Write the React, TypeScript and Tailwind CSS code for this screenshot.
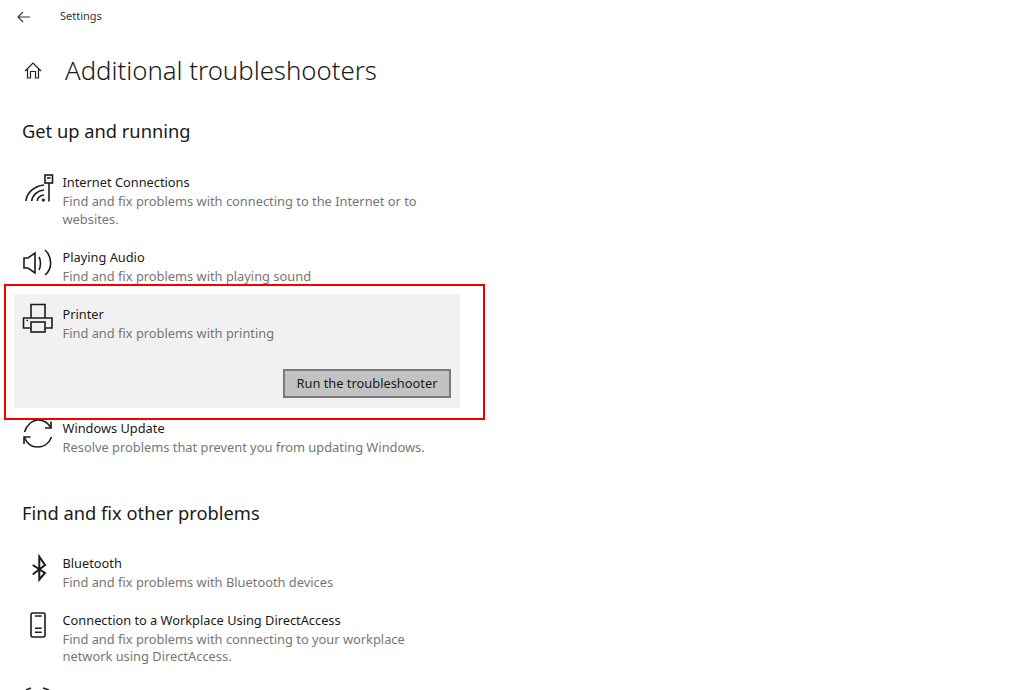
import type { ReactNode } from "react";

function BackIcon() {
  return (
    <svg width="14" height="12" viewBox="0 0 14 12" fill="none" stroke="#333" strokeWidth="1.1">
      <path d="M13 6H1.2M6 1 1 6l5 5" />
    </svg>
  );
}

function HomeIcon() {
  return (
    <svg width="18" height="18" viewBox="0 0 18 18" fill="none" stroke="#222" strokeWidth="1.2">
      <path d="M1 10 9 2l8 8M3.500 8V17H6.500V10.500H11.500V17H14.500V8" />
    </svg>
  );
}

function Icon({ children }: { children: ReactNode }) {
  return (
    <svg width="32" height="32" viewBox="0 0 32 32" fill="none" stroke="#1c1c1c" strokeWidth="1.6">
      {children}
    </svg>
  );
}

function NetworkIcon() {
  return (
    <Icon>
      <path d="M4 30C4.500 22 12 15 22 14" />
      <path d="M9.700 30C10 25 15 19.500 22 19" />
      <path d="M15.300 30C15.500 27 18 24.500 22 24" />
      <circle cx="21.300" cy="29" r="1.600" fill="#1c1c1c" stroke="none" />
      <path d="M27 12V30.500" />
      <rect x="23" y="4" width="7.500" height="8" />
      <path d="M25 7h3.500" />
    </Icon>
  );
}

function SpeakerIcon() {
  return (
    <Icon>
      <path d="M2 12h4L13 7v20L6 22H2z" />
      <path d="M17 11c2 3 2 9 0 13" />
      <path d="M23 4c7.500 7 7.500 19 0 25" />
    </Icon>
  );
}

function PrinterIcon() {
  return (
    <Icon>
      <path d="M9 15V1.500h14V15" />
      <path d="M9 25H1.500V15H30V25H23" />
      <rect x="9" y="19" width="14" height="10" />
      <path d="M4.500 17.500h1.500" />
    </Icon>
  );
}

function SyncIcon() {
  return (
    <Icon>
      <path d="M2.500 15C5 7 11 3 16 3C21 3 26 5.500 29 11" />
      <path d="M29 4.500V11H23" />
      <path d="M29.500 20C27 27 21 30 15.500 30C10 30 5 27 2.500 20.500" />
      <path d="M2 27V20H8.500" />
    </Icon>
  );
}

function BluetoothIcon() {
  return (
    <Icon>
      <path d="M10.700 13 23 21 17.300 27.500V4.700L23 13 10.700 22.500" strokeWidth="2" />
    </Icon>
  );
}

function PhoneIcon() {
  return (
    <Icon>
      <rect x="9" y="4" width="14" height="24" rx="1.500" />
      <path d="M13 7h6.700M13 19.300h6.700M13 23.300h6.700" />
    </Icon>
  );
}

function TroubleshooterRow({
  icon,
  title,
  children,
}: {
  icon: ReactNode;
  title: string;
  children: ReactNode;
}) {
  return (
    <div className="flex">
      <div className="-mt-[2px] h-[32px] w-[48.5px] shrink-0 pl-[8px]">{icon}</div>
      <div className="w-[375px]">
        <div className="h-[20px] text-[12.8px] leading-[18px] text-[#1a1a1a]">{title}</div>
        <div className="text-[12.85px] leading-[17.5px] text-[#767676]">{children}</div>
      </div>
    </div>
  );
}

export default function App() {
  return (
    <div className="relative h-[690px] w-[1024px] overflow-hidden bg-white font-['Noto_Sans',sans-serif]">
      <header className="flex h-[33px] items-center pl-[17px]">
        <BackIcon />
        <span className="ml-[29px] text-[11px] text-[#333]">Settings</span>
      </header>

      <div className="mt-[18px] flex h-[38px] items-center pl-[24px]">
        <HomeIcon />
        <h1 className="ml-[23px] text-[25.75px] font-light text-[#1a1a1a]">Additional troubleshooters</h1>
      </div>

      <h2 className="mt-[29px] h-[27px] pl-[22px] text-[18.3px] leading-[25px] text-[#1a1a1a]">Get up and running</h2>

      <section className="mt-[28px] ml-[14px] w-[446px]">
        <div className="h-[75px]">
          <TroubleshooterRow icon={<NetworkIcon />} title="Internet Connections">
            Find and fix problems with connecting to the Internet or to websites.
          </TroubleshooterRow>
        </div>
        <div className="h-[46px]">
          <TroubleshooterRow icon={<SpeakerIcon />} title="Playing Audio">
            Find and fix problems with playing sound
          </TroubleshooterRow>
        </div>
        <div className="h-[114px] bg-[#f1f1f1] pt-[11px]">
          <TroubleshooterRow icon={<PrinterIcon />} title="Printer">
            Find and fix problems with printing
          </TroubleshooterRow>
          <div className="mt-[26px] flex justify-end pr-[9px]">
            <button className="h-[29px] w-[168px] border-2 border-[#7a7a7a] bg-[#c2c2c2] pt-[2px] text-[12.85px] text-[#1a1a1a]">
              Run the troubleshooter
            </button>
          </div>
        </div>
        <div className="mt-[11px]">
          <TroubleshooterRow icon={<SyncIcon />} title="Windows Update">
            Resolve problems that prevent you from updating Windows.
          </TroubleshooterRow>
        </div>
      </section>

      <h2 className="mt-[43px] h-[27px] pl-[22px] text-[18.3px] leading-[25px] text-[#1a1a1a]">Find and fix other problems</h2>

      <section className="mt-[27px] ml-[14px] w-[446px]">
        <div className="h-[57px]">
          <TroubleshooterRow icon={<BluetoothIcon />} title="Bluetooth">
            Find and fix problems with Bluetooth devices
          </TroubleshooterRow>
        </div>
        <TroubleshooterRow icon={<PhoneIcon />} title="Connection to a Workplace Using DirectAccess">
          Find and fix problems with connecting to your workplace network using DirectAccess.
        </TroubleshooterRow>
      </section>

      {/* partly cut-off icon of the next row */}
      <svg className="absolute left-[22px] top-[687px]" width="32" height="3" viewBox="0 0 32 3" fill="none" stroke="#222" strokeWidth="1.500">
        <path d="M9 1 4 3M21 1l6 2" />
      </svg>

      {/* annotation box */}
      <div className="pointer-events-none absolute left-[4px] top-[284px] h-[136px] w-[481px] border-2 border-[#f40000]" />
    </div>
  );
}
